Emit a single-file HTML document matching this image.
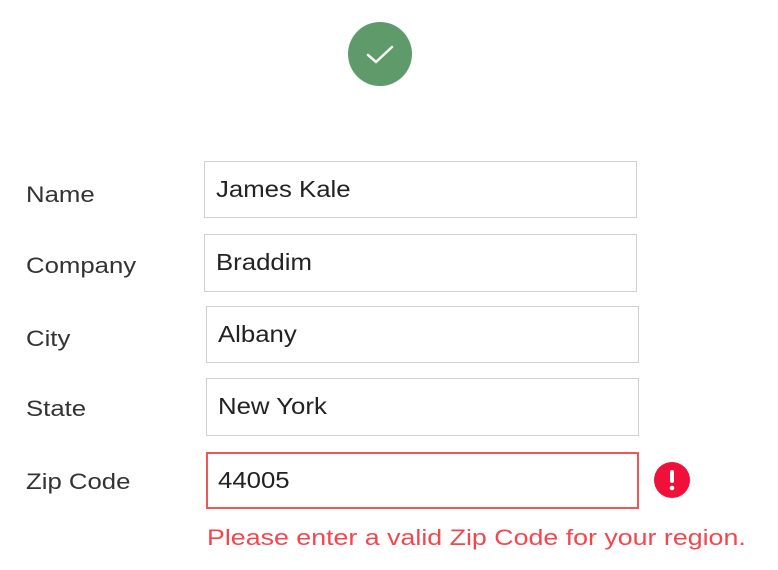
<html><head><style>
body{margin:0;width:778px;height:570px;background:#fff;font-family:"Liberation Sans",sans-serif;position:relative;overflow:hidden}
.l{position:absolute;font-size:22px;color:#333;transform:scaleX(1.17);transform-origin:0 0}
.b{position:absolute;width:430px;height:55px;border:1px solid #d0d0d0;box-sizing:border-box;color:#222;padding-left:11px;line-height:54px}
.b span{display:inline-block;font-size:23px;transform:scaleX(1.12);transform-origin:0 0}
</style></head><body>
<svg style="position:absolute;left:347px;top:21px" width="66" height="66"><circle cx="33" cy="33" r="32" fill="#5f9b6a"/><path d="M21 34 L29 41 L45 26" stroke="#f4f4f4" stroke-width="2.5" fill="none" stroke-linecap="round"/></svg>
<div class="l" style="left:26px;top:182px">Name</div>
<div class="l" style="left:26px;top:253px">Company</div>
<div class="l" style="left:26px;top:326px">City</div>
<div class="l" style="left:26px;top:396px">State</div>
<div class="l" style="left:26px;top:469px">Zip Code</div>
<div class="b" style="left:204px;top:161px;height:57px;width:433px"><span>James Kale</span></div>
<div class="b" style="left:204px;top:234px;height:58px;width:433px"><span>Braddim</span></div>
<div class="b" style="left:206px;top:306px;height:57px;width:433px"><span>Albany</span></div>
<div class="b" style="left:206px;top:378px;height:58px;width:433px"><span>New York</span></div>
<div class="b" style="left:206px;top:452px;height:57px;width:433px;border:2px solid #f25555;padding-left:10px;line-height:53px"><span>44005</span></div>
<svg style="position:absolute;left:653px;top:461px" width="38" height="38"><circle cx="19" cy="19" r="18" fill="#f0103a"/><rect x="17" y="9" width="4" height="13" rx="2" fill="#fff"/><circle cx="19" cy="27" r="2.3" fill="#fff"/></svg>
<div style="position:absolute;left:207px;top:525px;font-size:22.5px;color:#f5454f;white-space:nowrap;transform:scaleX(1.19);transform-origin:0 0">Please enter a valid Zip Code for your region.</div>
</body></html>
